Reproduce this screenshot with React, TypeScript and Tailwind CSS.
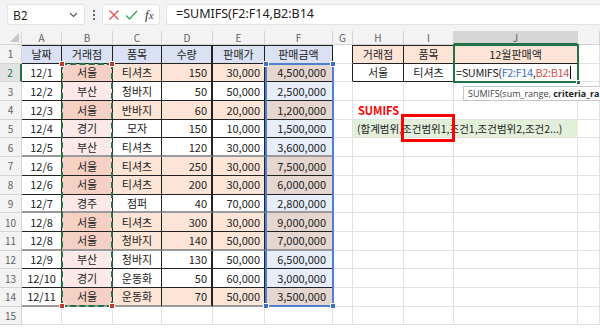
import React from 'react';

const FONT = { fontFamily: '"Noto Sans CJK KR", "Noto Sans", sans-serif' };

type Row = [string, string, string, number, string, string];

const data: Row[] = [
  ['12/1', '서울', '티셔츠', 150, '30,000', '4,500,000'],
  ['12/2', '부산', '청바지', 50, '50,000', '2,500,000'],
  ['12/3', '서울', '반바지', 60, '20,000', '1,200,000'],
  ['12/4', '경기', '모자', 150, '10,000', '1,500,000'],
  ['12/5', '부산', '티셔츠', 120, '30,000', '3,600,000'],
  ['12/6', '서울', '티셔츠', 250, '30,000', '7,500,000'],
  ['12/6', '서울', '티셔츠', 200, '30,000', '6,000,000'],
  ['12/7', '경주', '점퍼', 40, '70,000', '2,800,000'],
  ['12/8', '서울', '티셔츠', 300, '30,000', '9,000,000'],
  ['12/8', '서울', '청바지', 140, '50,000', '7,000,000'],
  ['12/9', '부산', '청바지', 130, '50,000', '6,500,000'],
  ['12/10', '경기', '운동화', 50, '60,000', '3,000,000'],
  ['12/11', '서울', '운동화', 70, '50,000', '3,500,000'],
];

const letters = ['A', 'B', 'C', 'D', 'E', 'F', 'G', 'H', 'I', 'J', ''];

// rows that get the heavier grey rule underneath
const heavy = [6, 9, 11, 14];

const Cell: React.FC<{ className?: string; children?: React.ReactNode }> = ({ className = '', children }) => (
  <div
    className={`flex items-center overflow-visible whitespace-nowrap border-r border-b border-[#e1e1e1] text-[11px] text-[#222] px-[3px] ${className}`}
  >
    {children}
  </div>
);

const Handle: React.FC<{ className: string }> = ({ className }) => (
  <div className={`absolute w-[6px] h-[6px] border border-white ${className}`} />
);

export default function App() {
  const cells: React.ReactNode[] = [];

  // column header row
  cells.push(
    <div key="corner" className="relative border-r border-b border-[#d4d4d4] bg-[#f3f3f3]">
      <div className="absolute right-[2px] bottom-[2px] w-0 h-0 border-l-[9px] border-l-transparent border-b-[9px] border-b-[#c6c6c6]" />
    </div>
  );
  letters.forEach((l, i) => {
    const active = l === 'J';
    cells.push(
      <div
        key={'h' + i}
        className={`flex items-center justify-center text-[10px] text-[#616161] border-r border-[#d4d4d4] ${
          active ? 'bg-[#d6d6d6] border-b-2 border-b-[#217346] text-[#217346]' : 'bg-[#f3f3f3] border-b border-b-[#d4d4d4]'
        }`}
      >
        {l}
      </div>
    );
  });

  for (let r = 1; r <= 15; r++) {
    const rowHead = r === 2;
    cells.push(
      <div
        key={'r' + r}
        className={`flex items-center justify-center text-[10px] border-b border-[#d4d4d4] ${
          rowHead ? 'bg-[#e3e3e3] text-[#217346] border-r-2 border-r-[#217346]' : 'bg-[#f3f3f3] text-[#616161] border-r border-r-[#d4d4d4]'
        }`}
      >
        {r}
      </div>
    );

    const d = r >= 2 && r <= 14 ? data[r - 2] : null;
    const seoul = d ? d[1] === '서울' : false;
    const bottom = heavy.includes(r) ? 'border-b-2 border-b-[#9a9a9a]' : 'border-b-[#222]';
    const tbl = `border-r-[#222] ${bottom}`;

    if (r === 1) {
      ['날짜', '거래점', '품목', '수량', '판매가', '판매금액'].forEach((t, i) => (
        cells.push(
          <Cell key={'c1' + i} className={`justify-center bg-[#d9e1f2] border-t border-t-[#222] ${tbl} ${i === 3 ? 'border-r-2 border-r-[#8a8a8a]' : ''}`}>
            {t}
          </Cell>
        )
      ));
    } else if (d) {
      cells.push(<Cell key={'a' + r} className={`justify-center bg-white ${tbl}`}>{d[0]}</Cell>);
      cells.push(
        <Cell key={'b' + r} className={`justify-center ${seoul ? 'bg-[#f5d0c4]' : 'bg-[#fbe9e9]'} ${tbl}`}>
          {d[1]}
        </Cell>
      );
      cells.push(
        <Cell key={'c' + r} className={`justify-center ${seoul ? 'bg-[#fce4d6]' : 'bg-white'} ${tbl}`}>
          {d[2]}
        </Cell>
      );
      cells.push(
        <Cell key={'d' + r} className={`justify-end pr-[4px] ${seoul ? 'bg-[#fce4d6]' : 'bg-white'} ${tbl} border-r-2 border-r-[#8a8a8a]`}>
          {d[3]}
        </Cell>
      );
      cells.push(
        <Cell key={'e' + r} className={`justify-end pr-[4px] ${seoul ? 'bg-[#fce4d6]' : 'bg-white'} ${tbl}`}>
          {d[4]}
        </Cell>
      );
      cells.push(
        <Cell key={'f' + r} className={`justify-end pr-[6px] ${seoul ? 'bg-[#e5d6d0]' : 'bg-[#e7eef9]'} ${tbl}`}>
          {d[5]}
        </Cell>
      );
    } else {
      for (let i = 0; i < 6; i++) cells.push(<Cell key={`x${r}-${i}`} />);
    }

    // G
    cells.push(<Cell key={'g' + r} className={r <= 2 ? 'border-r-[#222]' : ''} />);

    // H, I, J
    if (r === 1) {
      cells.push(<Cell key="h1" className="justify-center bg-[#fce4d6] border-t border-t-[#222] border-r-[#222] border-b-[#222]">거래점</Cell>);
      cells.push(<Cell key="i1" className="justify-center bg-[#fce4d6] border-t border-t-[#222] border-r-[#222] border-b-[#222]">품목</Cell>);
      cells.push(<Cell key="j1" className="justify-center bg-[#fce4d6] border-r-[#222] border-b-[#222]">12월판매액</Cell>);
    } else if (r === 2) {
      cells.push(<Cell key="h2" className="justify-center border-r-[#222] border-b-[#222]">서울</Cell>);
      cells.push(<Cell key="i2" className="justify-center border-r-[#222] border-b-[#222]">티셔츠</Cell>);
      cells.push(
        <Cell key="j2" className="bg-white border-r-[#222] border-b-[#222] pl-[2px] text-[10px] tracking-[-0.4px]">
          <span>=SUMIFS(</span>
          <span className="text-[#3a6fcf]">F2:F14</span>
          <span>,</span>
          <span className="text-[#d0514a]">B2:B14</span>
          <span className="inline-block w-px h-[13px] bg-black ml-px" />
        </Cell>
      );
    } else if (r === 4) {
      cells.push(<Cell key="h4" className="font-bold text-[#ff0000] text-[10.5px] pl-[5px]">SUMIFS</Cell>);
      cells.push(<Cell key="i4" />);
      cells.push(<Cell key="j4" />);
    } else if (r === 5) {
      cells.push(
        <div key="hij5" className="col-span-3 flex items-center bg-[#e2efda] border-b border-[#e1e1e1] text-[10.5px] text-[#222] pl-[4px] whitespace-nowrap">
          (합계범위,조건범위1,조건1,조건범위2,조건2...)
        </div>
      );
    } else {
      for (let i = 0; i < 3; i++) cells.push(<Cell key={`y${r}-${i}`} />);
    }
    // K
    cells.push(<Cell key={'k' + r} />);
  }

  return (
    <div className="w-[600px] h-[328px] overflow-hidden bg-white" style={FONT}>
      {/* formula bar */}
      <div className="h-[31px] bg-[#f3f3f3] flex items-center gap-[6px] pl-[7px] pb-[2px]">
        <div className="w-[78px] h-[21px] bg-white rounded-[3px] border border-[#e3e3e3] flex items-center justify-between px-[5px] text-[12px] text-[#222]">
          <span>B2</span>
          <svg width="9" height="6" viewBox="0 0 9 6" className="mr-[1px]">
            <path d="M1 1l3.5 3.5L8 1" fill="none" stroke="#555" strokeWidth="1.1" />
          </svg>
        </div>
        <div className="flex flex-col gap-[2px] items-center w-[5px]">
          <div className="w-[2px] h-[2px] bg-[#666]" />
          <div className="w-[2px] h-[2px] bg-[#666]" />
          <div className="w-[2px] h-[2px] bg-[#666]" />
        </div>
        <div className="w-[58px] h-[21px] bg-white rounded-[3px] border border-[#e3e3e3] flex items-center gap-[5px] pl-[5px]">
          <svg width="12" height="12" viewBox="0 0 12 12">
            <path d="M1.5 1.5l9 9M10.5 1.5l-9 9" stroke="#e04a4a" strokeWidth="1.3" />
          </svg>
          <svg width="13" height="12" viewBox="0 0 13 12">
            <path d="M1 6.5l3.5 3.5L12 2" fill="none" stroke="#3aa655" strokeWidth="1.3" />
          </svg>
          <span className="text-[13px] italic text-[#333] ml-[2px]" style={{ fontFamily: '"Liberation Serif", serif' }}>
            f<span className="text-[11px]">x</span>
          </span>
        </div>
        <div className="flex-1 h-[21px] bg-white rounded-l-[3px] border border-[#e3e3e3] border-r-0 flex items-center pl-[9px] text-[12.5px] text-[#222]" style={{ fontFamily: '"Noto Sans", sans-serif' }}>
          =SUMIFS(F2:F14,B2:B14
        </div>
      </div>

      {/* sheet */}
      <div className="relative">
        <div className="grid grid-cols-[22px_40px_51px_49px_51px_52px_68px_20px_51px_50px_124px_1fr] grid-rows-[14px_repeat(15,18.7px)]">
          {cells}
        </div>

        {/* B2:B14 criteria range marquee */}
        <div className="absolute left-[61px] top-[32px] w-[52px] h-[244px] border-2 border-dashed border-[#217346]">
          <Handle className="-left-[4px] -top-[4px] bg-[#c0392b]" />
          <Handle className="-right-[4px] -top-[4px] bg-[#c0392b]" />
          <Handle className="-left-[4px] -bottom-[4px] bg-[#c0392b]" />
          <Handle className="-right-[4px] -bottom-[4px] bg-[#c0392b]" />
        </div>

        {/* F2:F14 sum range */}
        <div className="absolute left-[265px] top-[32px] w-[69px] h-[244px] border-2 border-[#4f7fd3]">
          <Handle className="-left-[4px] -top-[4px] bg-[#3f6fc6]" />
          <Handle className="-right-[4px] -top-[4px] bg-[#3f6fc6]" />
          <Handle className="-left-[4px] -bottom-[4px] bg-[#3f6fc6]" />
          <Handle className="-right-[4px] -bottom-[4px] bg-[#3f6fc6]" />
        </div>

        {/* active cell J */}
        <div className="absolute left-[453px] top-[13px] w-[126px] h-[39px] border-2 border-[#217346]">
          <div className="absolute -right-[4px] -bottom-[4px] w-[5px] h-[5px] bg-[#217346] border border-white" />
        </div>

        {/* function tooltip */}
        <div className="absolute left-[463px] top-[55px] w-[137px] h-[15px] pl-[4px] bg-white border border-[#c6c6c6] border-r-0 flex items-center text-[9px] text-[#444] whitespace-nowrap" style={{ fontFamily: '"Open Sans", sans-serif' }}>
          SUMIFS(sum_range,&nbsp;<b className="text-[#222]">criteria_ra</b>
        </div>

        {/* highlight box */}
        <div className="absolute left-[401px] top-[83px] w-[54px] h-[28px] border-[3px] border-[#ff0000]" />
      </div>
    </div>
  );
}
